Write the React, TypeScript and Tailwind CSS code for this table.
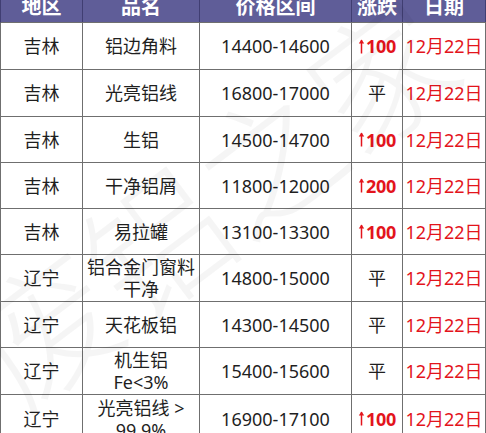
import React from "react";

type Row = {
  region: string;
  name: string[];
  price: string;
  change: string | null; // null => 平
  h: number;
};

const rows: Row[] = [
  { region: "吉林", name: ["铝边角料"], price: "14400-14600", change: "100", h: 47 },
  { region: "吉林", name: ["光亮铝线"], price: "16800-17000", change: null, h: 47 },
  { region: "吉林", name: ["生铝"], price: "14500-14700", change: "100", h: 46 },
  { region: "吉林", name: ["干净铝屑"], price: "11800-12000", change: "200", h: 46 },
  { region: "吉林", name: ["易拉罐"], price: "13100-13300", change: "100", h: 46 },
  { region: "辽宁", name: ["铝合金门窗料", "干净"], price: "14800-15000", change: null, h: 47 },
  { region: "辽宁", name: ["天花板铝"], price: "14300-14500", change: null, h: 46 },
  { region: "辽宁", name: ["机生铝", "Fe<3%"], price: "15400-15600", change: null, h: 47 },
  { region: "辽宁", name: ["光亮铝线 >", "99.9%"], price: "16900-17100", change: "100", h: 48 },
];

const font = { fontFamily: '"Noto Sans", "Noto Sans CJK SC", sans-serif' };

function Arrow() {
  return (
    <svg width="7" height="15" viewBox="0 0 7 15" className="mr-[1px]" aria-hidden>
      <path d="M3.5 1 L3.5 14.5" stroke="#e3141c" strokeWidth="1.5" fill="none" />
      <path d="M0.8 4.6 L3.5 0.6 L6.2 4.6 Z" fill="#e3141c" />
    </svg>
  );
}

export default function App() {
  const cell = "flex items-center justify-center border-r border-b border-[#6f6f6f] text-center";
  const head =
    "flex items-center justify-center border-r border-[#403e72] text-white font-bold text-[20px] leading-none";
  return (
    <div className="relative w-[486px] h-[433px] overflow-hidden bg-white" style={font}>
      <div className="w-[486px] -mt-[8px]">
        <div className="grid grid-cols-[82px_117px_152px_51px_83px] border-l border-[#403e72] bg-[#5f5d98] h-[31px] border-b border-b-[#6f6f6f]">
          <div className={head}>地区</div>
          <div className={head}>品名</div>
          <div className={head}>价格区间</div>
          <div className={head}>涨跌</div>
          <div className={head}>日期</div>
        </div>
        {rows.map((r, i) => (
          <div
            key={i}
            className="grid grid-cols-[82px_117px_152px_51px_83px] border-l border-[#6f6f6f] text-[18px] leading-[22px] text-[#1f1f1f]"
            style={{ height: r.h }}
          >
            <div className={cell}>{r.region}</div>
            <div className={cell + " flex-col"}>
              {r.name.map((n, j) => (
                <span key={j} className="block whitespace-nowrap">
                  {n}
                </span>
              ))}
            </div>
            <div className={cell}>{r.price}</div>
            <div className={cell}>
              {r.change ? (
                <span className="flex items-center text-[#e3141c] font-bold tracking-[-0.3px]">
                  <Arrow />
                  {r.change}
                </span>
              ) : (
                <span>平</span>
              )}
            </div>
            <div className={cell + " text-[#e3141c] whitespace-nowrap"}>12月22日</div>
          </div>
        ))}
      </div>
      <div className="pointer-events-none absolute inset-0 overflow-hidden">
        <div
          className="absolute left-[-10px] top-[300px] origin-left whitespace-nowrap text-[140px] leading-none text-black/[0.04] font-light"
          style={{ transform: "rotate(-37deg)" }}
        >
          废铝之家
        </div>
      </div>
    </div>
  );
}
